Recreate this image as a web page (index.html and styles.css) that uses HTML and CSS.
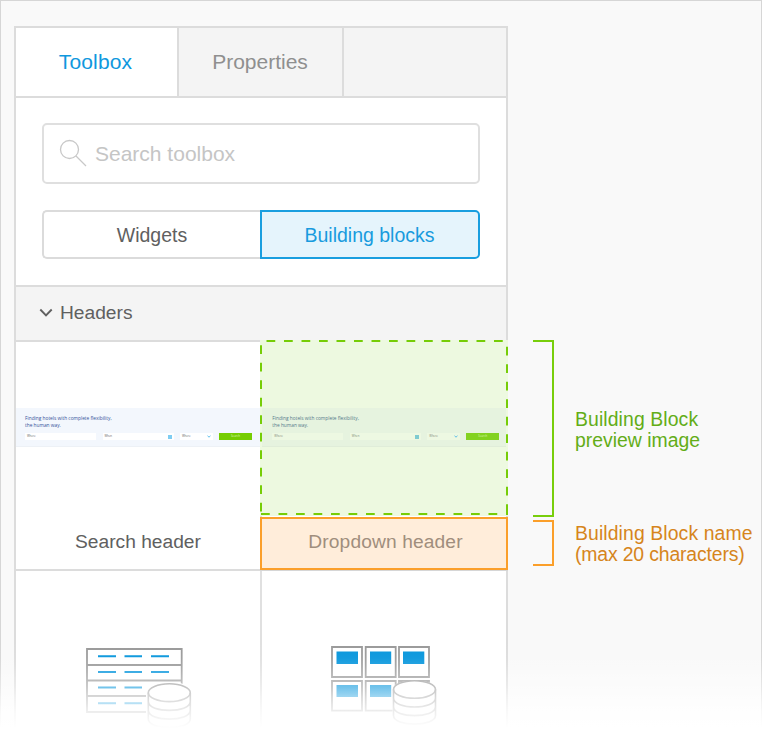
FILE: index.html
```html
<!DOCTYPE html>
<html lang="en">
<head>
<meta charset="utf-8">
<title>Toolbox building blocks</title>
<link rel="stylesheet" href="styles.css">
</head>
<body>
<main class="page">
  <section class="panel">
    <nav class="tabs">
      <div class="tab tab-active"><span>Toolbox</span></div>
      <div class="tab tab-second"><span>Properties</span></div>
      <div class="tab tab-empty"></div>
    </nav>
    <div class="filters">
      <div class="search">
        <svg class="search-icon" width="30" height="30" viewBox="0 0 30 30"><circle cx="10.5" cy="10.5" r="9" /><path d="M17 17 27 27" /></svg>
        <span>Search toolbox</span>
      </div>
      <div class="switch">
        <div class="option"><span>Widgets</span></div>
        <div class="option option-active"><span>Building blocks</span></div>
      </div>
    </div>
    <header class="group">
      <svg width="14" height="10" viewBox="0 0 14 10"><path d="M1.3 1.5 7 7.3 12.7 1.5" /></svg>
      <span>Headers</span>
    </header>
    <div class="grid">
      <article class="block">
        <div class="preview">
          <div class="thumb">
            <p>Finding hotels with complete flexibility,<br>the human way.</p>
            <div class="form"><i class="where">Where</i><i class="when">When <b></b></i><i class="pick">Where <svg width="4" height="3" viewBox="0 0 4 3"><path d="M.5 .8 2 2.2 3.5 .8" /></svg></i><i class="go">Search</i></div>
          </div>
        </div>
        <div class="name"><span>Search header</span></div>
      </article>
      <article class="block block-marked">
        <div class="preview">
          <div class="thumb">
            <p>Finding hotels with complete flexibility,<br>the human way.</p>
            <div class="form"><i class="where">Where</i><i class="when">When <b></b></i><i class="pick">Where <svg width="4" height="3" viewBox="0 0 4 3"><path d="M.5 .8 2 2.2 3.5 .8" /></svg></i><i class="go">Search</i></div>
          </div>
          <svg class="dashes" width="248" height="176" viewBox="0 0 248 176">
            <path d="M0 1H248" stroke-dasharray="8.75 8.75" stroke-dashoffset="-6.5" />
            <path d="M0 174H248" stroke-dasharray="8.75 8.75" stroke-dashoffset="-1" />
            <path d="M1 0V175" stroke-dasharray="8.75 8.75" stroke-dashoffset="-5.2" />
            <path d="M247 0V175" stroke-dasharray="8.75 8.75" stroke-dashoffset="-6.7" />
          </svg>
        </div>
        <div class="name"><span>Dropdown header</span></div>
      </article>
      <article class="block block-icon">
        <svg width="106" height="82" viewBox="86 647 106 82">
          <g class="lines"><path d="M87 649H181.7V712H87ZM87 665H181.7M87 680.5H181.7M87 696H181.7" /></g>
          <path class="blue" d="M98 656.2H116M124.5 656.2H142M151 656.2H169M98 672H116M124.5 672H142M151 672H169M98 687.5H116M124.5 687.5H142M98 703.2H116M124.5 703.2H142" />
          <path class="mask" d="M146 692C146 686 156 682 169 682S193 686 193 692V730H146Z" />
          <g class="drum"><ellipse cx="169.3" cy="692.7" rx="21" ry="8.9" /><path d="M148.3 692.7V719C148.3 730.5 190.3 730.5 190.3 719V692.7M148.3 701.5C148.3 713.3 190.3 713.3 190.3 701.5M148.3 710.3C148.3 722 190.3 722 190.3 710.3" /></g>
        </svg>
      </article>
      <article class="block block-icon block-cards">
        <svg width="108" height="84" viewBox="331 645 108 84">
          <g class="lines"><path d="M332 647H362V677H332ZM365.7 647H395.7V677H365.7ZM399 647H429V677H399ZM332 681H362V710.7H332ZM365.7 681H395.7V710.7H365.7ZM399 681H429V710.7H399Z" /></g>
          <path class="fill" d="M336.5 651.5H358V664H336.5ZM370 651.5H391.2V664H370ZM403 651.5H424.3V664H403ZM336.5 685H358V697H336.5ZM370 685H391.2V697H370Z" />
          <path class="mask" d="M392.5 690C392.5 684 401 680.8 414.3 680.8S438 684 438 690V730H392.5Z" />
          <g class="drum"><ellipse cx="414.5" cy="689.5" rx="21" ry="8.8" /><path d="M393.5 689.5V715.5C393.5 727 435.5 727 435.5 715.5V689.5M393.5 698C393.5 710 435.5 710 435.5 698M393.5 706.8C393.5 718.5 435.5 718.5 435.5 706.8" /></g>
        </svg>
      </article>
    </div>
  </section>
  <aside class="notes">
    <div class="note note-green"><div class="bracket"></div><p><span class="wide">Building Block</span><br><span>preview image</span></p></div>
    <div class="note note-orange"><div class="bracket"></div><p><span class="wide">Building Block name</span><br><span class="tight">(max 20 characters)</span></p></div>
  </aside>
  <div class="fade"></div>
</main>
</body>
</html>
```
FILE: styles.css
```css
* { box-sizing: border-box; }
body { margin: 0; background: #fff; font-family: "Liberation Sans", Arial, sans-serif; }
p { margin: 0; }
svg { display: block; fill: none; flex: none; }
span { white-space: nowrap; }

.page { position: relative; display: flex; width: 762px; height: 733px; overflow: hidden; padding: 26px 0 0 14px; background: #f9f9f9; box-shadow: inset 0 1px #d6d6d6, inset 1px 0 #d6d6d6, inset -1px 0 #d6d6d6; }
.panel { width: 494px; height: 720px; flex: none; background: #fff; border: 2px solid #dcdcdc; border-bottom: 0; }

.tabs { display: flex; height: 70px; border-bottom: 2px solid #dcdcdc; background: #f4f4f4; font-size: 21px; color: #8f8f8f; }
.tab { display: flex; align-items: center; justify-content: center; border-right: 2px solid #dcdcdc; }
.tab-active { width: 163px; background: #fff; color: #0f98de; padding-right: 2px; letter-spacing: .15px; }
.tab-second { width: 165px; padding-right: 1px; }
.tab-empty { flex: 1; border: 0; }

.filters { height: 187px; padding: 25px 26px 0; }
.search { display: flex; align-items: center; gap: 6px; height: 61px; padding-left: 15px; border: 2px solid #dfdfdf; border-radius: 5px; font-size: 21px; color: #c5c5c5; }
.search-icon { stroke: #c8c8c8; stroke-width: 1.3; }
.switch { display: flex; height: 49px; margin-top: 26px; font-size: 19.5px; }
.option { display: flex; align-items: center; justify-content: center; width: 218px; padding-top: 2px; border: 2px solid #dbdbdb; border-right: 0; border-radius: 5px 0 0 5px; color: #606060; }
.option-active { width: 220px; padding-right: 1px; border: 2px solid #199edf; border-radius: 0 5px 5px 0; background: #e5f4fc; color: #189bde; }

.group { display: flex; align-items: center; gap: 7px; height: 57px; padding: 0 0 2px 23px; border-top: 2px solid #dcdcdc; border-bottom: 2px solid #dcdcdc; background: #f4f4f4; color: #606060; font-size: 19.2px; }
.group svg { stroke: #606060; stroke-width: 1.9; }

.grid { display: grid; grid-template-columns: 246px 244px; grid-template-rows: 229px 160px; }
.block { border-right: 2px solid #e0e0e0; border-bottom: 2px solid #dcdcdc; }
.block:nth-child(even) { border-right: 0; }
.preview { height: 174px; padding-top: 66px; }
.name { display: flex; align-items: center; justify-content: center; height: 53px; padding-bottom: 2px; font-size: 19.2px; color: #606060; }

.thumb { height: 39px; padding: 7px 0 0 9px; overflow: hidden; background: #f3f7fd; border-bottom: 1px solid #edf1f6; }
.thumb p { font: 4.8px/6.5px "Open Sans", sans-serif; color: #34519a; white-space: nowrap; }
.form { display: flex; margin-top: 5px; }
.form i { display: flex; align-items: center; justify-content: space-between; height: 7px; padding: 0 2px; background: #fff; font: 2.8px/7px "Open Sans", sans-serif; color: #666; }
.form .where { width: 71px; }
.form .when { width: 71px; margin-left: 6.5px; }
.form .when b { width: 4px; height: 4px; background: #7fcdf2; }
.form .pick { width: 33px; margin-left: 6.5px; }
.form .pick svg { stroke: #35ade8; stroke-width: .8; }
.form .go { width: 33px; margin-left: 6px; justify-content: center; background: #76cd02; color: #dff5c0; }

.block-marked { position: relative; margin-left: -2px; margin-right: -2px; border: 0; }
.block-marked .preview { position: relative; height: 176px; margin-top: -2px; padding-top: 68px; background: #edf9e0; }
.block-marked .thumb { margin: 0 2px; background: #e6f3df; border-color: #e0edd9; padding-left: 10.3px; }
.block-marked .thumb p { color: #55798a; }
.block-marked .form i { background: #edf8e2; color: #7d8a76; }
.block-marked .form .when b { background: #7fcbd0; }
.block-marked .form .go { background: #83d220; color: #d9f4b5; }
.dashes { position: absolute; left: 0; top: 0; stroke: #76cd07; stroke-width: 2; }
.block-marked .name { height: 53px; margin-top: 1px; border: 2px solid #fb9f2a; background: #ffedda; color: #a08e7d; padding: 0 0 4px 3px; letter-spacing: .12px; }
.block-marked::after { content: ""; display: block; height: 1px; background: #d6d6d6; }

.block-icon { border-bottom: 0; padding: 76px 0 0 70px; }
.block-cards { padding: 74px 0 0 69px; }
.lines { stroke: #999; stroke-width: 1.8; }
.blue { stroke: #0595dc; stroke-width: 2; }
.fill { fill: #0595dc; }
.mask { fill: #fff; }
.drum { stroke: #999; stroke-width: 1.6; }
.drum ellipse { fill: #fff; }

.notes { width: 229px; margin: 314px 0 0 25px; }
.note { display: flex; align-items: center; gap: 21px; font-size: 19.4px; line-height: 21px; white-space: nowrap; }
.note p { padding-top: 2px; }
.wide { letter-spacing: .1px; }
.tight { letter-spacing: -.15px; }
.bracket { width: 21px; height: 100%; border: 2px solid; border-left: 0; }
.note-green { height: 177px; color: #63ad17; }
.note-green .bracket { border-color: #78ce0c; }
.note-orange { height: 46px; margin-top: 3px; color: #d6851c; }
.note-orange .bracket { border-color: #fb9f2a; }

.fade { position: absolute; left: 0; right: 0; bottom: 0; height: 93px; background: linear-gradient(rgba(255,255,255,0), rgba(255,255,255,.06) 18px, rgba(255,255,255,.13) 25px, rgba(255,255,255,.43) 47px, rgba(255,255,255,.62) 57px, rgba(255,255,255,.82) 71px, #fff 88px); }
```
